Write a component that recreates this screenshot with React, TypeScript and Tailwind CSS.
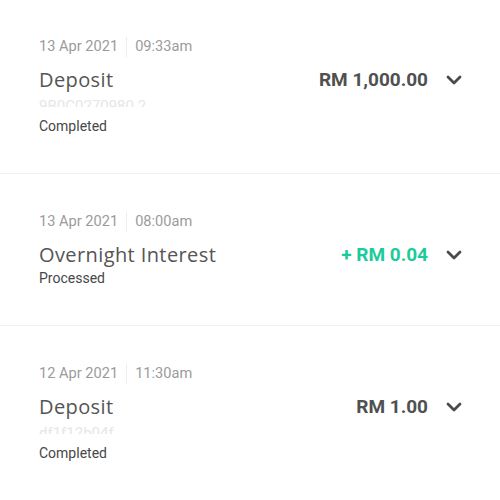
import React from "react";

type Tx = {
  date: string;
  time: string;
  title: string;
  amount: string;
  positive?: boolean;
  ref?: string;
  status: string;
};

const txs: Tx[] = [
  { date: "13 Apr 2021", time: "09:33am", title: "Deposit", amount: "RM 1,000.00", ref: "9B0C0270980 2", status: "Completed" },
  { date: "13 Apr 2021", time: "08:00am", title: "Overnight Interest", amount: "+ RM 0.04", positive: true, status: "Processed" },
  { date: "12 Apr 2021", time: "11:30am", title: "Deposit", amount: "RM 1.00", ref: "df1f12b04f", status: "Completed" },
];

function Chevron() {
  return (
    <svg width="16" height="10" viewBox="0 0 16 10" fill="none">
      <path d="M2 2l6 6 6-6" stroke="#4a4a4a" strokeWidth="2.8" strokeLinecap="round" strokeLinejoin="round" />
    </svg>
  );
}

function Row({ tx, first }: { tx: Tx; first: boolean }) {
  return (
    <div className={`px-[39px] ${first ? "pt-[37px]" : "pt-[38px]"} pb-[37px] border-b border-[#f1f1f1]`}>
      <div className="flex items-center h-[20px] text-[14.6px] text-[#9b9b9b]" style={{ fontFamily: "Roboto, sans-serif" }}>
        <span>{tx.date}</span>
        <span className="mx-[8px] w-px h-[20px] bg-[#ededed]" />
        <span>{tx.time}</span>
      </div>
      <div className="flex items-center justify-between mt-[10px] h-[26px]">
        <span className="text-[20px] text-[#555555] tracking-[0.4px]" style={{ fontFamily: "'Open Sans', sans-serif" }}>
          {tx.title}
        </span>
        <div className="flex items-center">
          <span
            className={`text-[19px] font-bold ${tx.positive ? "text-[#1ccb9a]" : "text-[#505050]"}`}
            style={{ fontFamily: "Roboto, sans-serif" }}
          >
            {tx.amount}
          </span>
          <span className="ml-[18px] mr-[-1px] flex items-center">
            <Chevron />
          </span>
        </div>
      </div>
      {tx.ref && (
        <div className="h-[23px] overflow-hidden">
          <div className="h-[10px] mt-[4px] overflow-hidden">
            <span className="text-[15px] leading-[18px] text-[#e6e6e6] block" style={{ fontFamily: "Roboto, sans-serif" }}>
              {tx.ref}
            </span>
          </div>
        </div>
      )}
      <div className="h-[20px] flex items-center text-[14px] text-[#474747]" style={{ fontFamily: "Roboto, sans-serif" }}>
        {tx.status}
      </div>
    </div>
  );
}

export default function App() {
  return (
    <div className="w-[500px] h-[500px] overflow-hidden bg-white">
      {txs.map((tx, i) => (
        <Row key={i} tx={tx} first={i === 0} />
      ))}
    </div>
  );
}
